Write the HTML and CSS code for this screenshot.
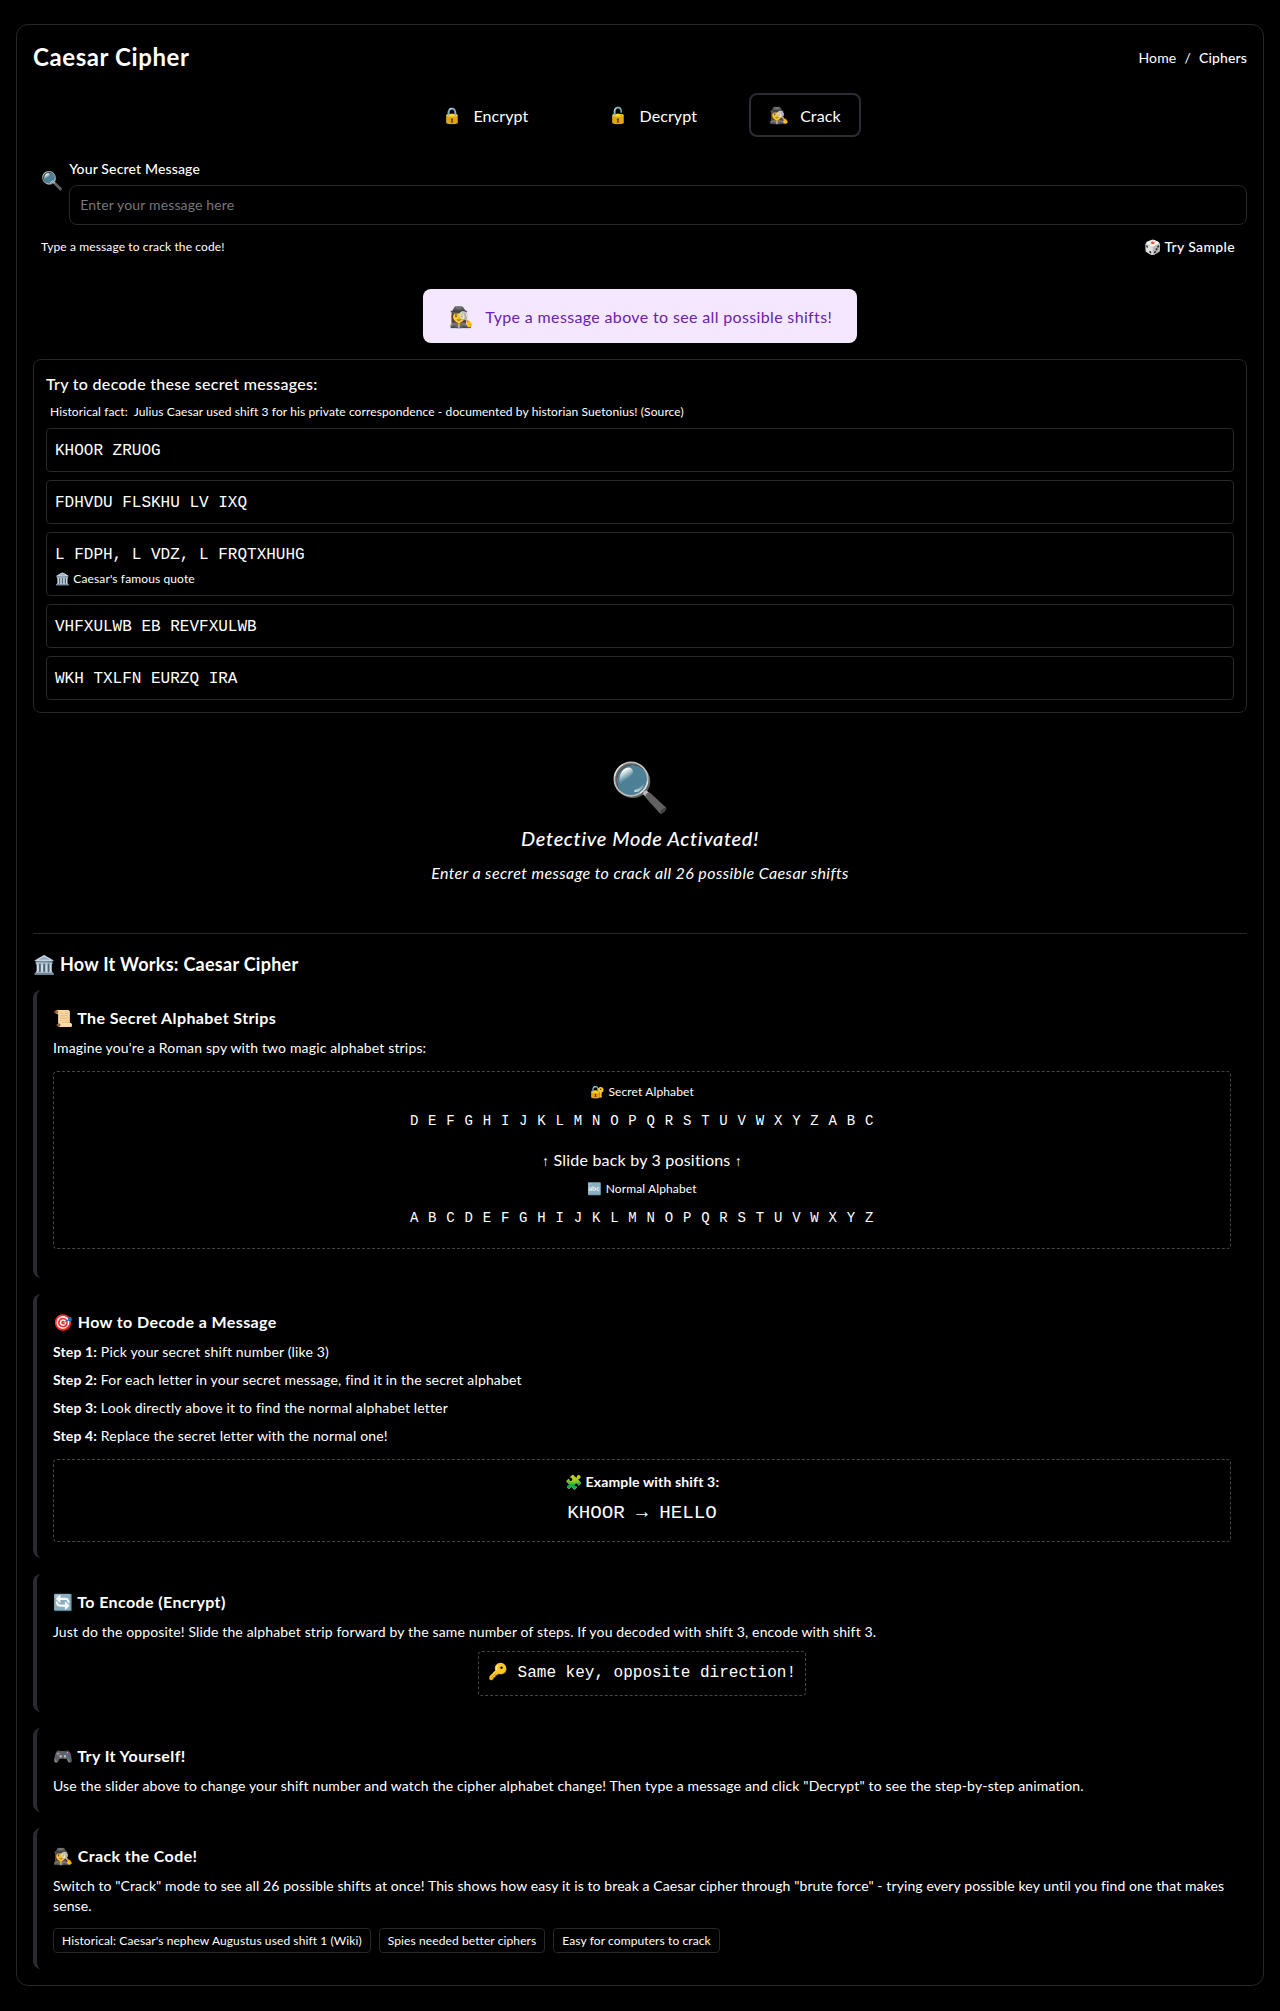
FILE: index.html
```html
<!DOCTYPE html>
<html lang="en">
<head>
  <meta charset="UTF-8" />
  <title>Caesar Cipher</title>
  <link rel="stylesheet" href="styles.css">
</head>
<body>
  <div class="page-card">
    <div class="top-bar">
      <h1>Caesar Cipher</h1>
      <div class="crumbs"><span>Home</span><span class="crumb-sep">/</span><span class="crumb-here">Ciphers</span></div>
    </div>

    <div class="tabs">
      <button class="tab"><span class="tab-icon">🔒</span>Encrypt</button>
      <button class="tab"><span class="tab-icon">🔓</span>Decrypt</button>
      <button class="tab active"><span class="tab-icon">🕵️‍♀️</span>Crack</button>
    </div>

    <div class="input-row">
      <span class="input-icon">🔍</span>
      <div class="input-wrap">
        <label class="input-label">Your Secret Message</label>
        <input class="message-input" type="text" placeholder="Enter your message here" />
      </div>
    </div>
    <div class="helper-row">
      <span class="helper-text">Type a message to crack the code!</span>
      <button class="sample-btn">🎲 Try Sample</button>
    </div>

    <div class="banner-wrap">
      <div class="banner"><span class="banner-icon">🕵️‍♀️</span>Type a message above to see all possible shifts!</div>
    </div>

    <div class="samples">
      <div class="samples-title">Try to decode these secret messages:</div>
      <div class="samples-fact">Historical fact: &nbsp;Julius Caesar used shift 3 for his private correspondence - documented by historian Suetonius! (Source)</div>
      <div class="sample-row"><span class="mono">KHOOR ZRUOG</span></div>
      <div class="sample-row"><span class="mono">FDHVDU FLSKHU LV IXQ</span></div>
      <div class="sample-row with-note"><span class="mono">L FDPH, L VDZ, L FRQTXHUHG</span><div class="sample-note">🏛️ Caesar's famous quote</div></div>
      <div class="sample-row"><span class="mono">VHFXULWB EB REVFXULWB</span></div>
      <div class="sample-row"><span class="mono">WKH TXLFN EURZQ IRA</span></div>
    </div>

    <div class="empty-state">
      <div class="empty-icon">🔍</div>
      <div class="empty-title">Detective Mode Activated!</div>
      <div class="empty-sub">Enter a secret message to crack all 26 possible Caesar shifts</div>
    </div>

    <hr class="divider" />

    <h2 class="how-title">🏛️ How It Works: Caesar Cipher</h2>

    <section class="how-card">
      <h3>📜 The Secret Alphabet Strips</h3>
      <p>Imagine you're a Roman spy with two magic alphabet strips:</p>
      <div class="dash-box strips">
        <div class="strip-label">🔐 Secret Alphabet</div>
        <div class="strip-letters">D E F G H I J K L M N O P Q R S T U V W X Y Z A B C</div>
        <div class="strip-slide"><span class="arrow">↑</span> Slide back by 3 positions <span class="arrow">↑</span></div>
        <div class="strip-label">🔤 Normal Alphabet</div>
        <div class="strip-letters">A B C D E F G H I J K L M N O P Q R S T U V W X Y Z</div>
      </div>
    </section>

    <section class="how-card">
      <h3>🎯 How to Decode a Message</h3>
      <p class="step"><strong>Step 1:</strong> Pick your secret shift number (like 3)</p>
      <p class="step"><strong>Step 2:</strong> For each letter in your secret message, find it in the secret alphabet</p>
      <p class="step"><strong>Step 3:</strong> Look directly above it to find the normal alphabet letter</p>
      <p class="step"><strong>Step 4:</strong> Replace the secret letter with the normal one!</p>
      <div class="dash-box example">
        <div class="example-label">🧩 Example with shift 3:</div>
        <div class="example-text">KHOOR → HELLO</div>
      </div>
    </section>

    <section class="how-card">
      <h3>🔄 To Encode (Encrypt)</h3>
      <p>Just do the opposite! Slide the alphabet strip forward by the same number of steps. If you decoded with shift 3, encode with shift 3.</p>
      <div class="key-wrap"><div class="dash-box key-note">🔑 Same key, opposite direction!</div></div>
    </section>

    <section class="how-card">
      <h3>🎮 Try It Yourself!</h3>
      <p>Use the slider above to change your shift number and watch the cipher alphabet change! Then type a message and click "Decrypt" to see the step-by-step animation.</p>
    </section>

    <section class="how-card last">
      <h3>🕵️‍♀️ Crack the Code!</h3>
      <p class="tight">Switch to "Crack" mode to see all 26 possible shifts at once! This shows how easy it is to break a Caesar cipher through "brute force" - trying every possible key until you find one that makes sense.</p>
      <div class="chips">
        <span class="chip">Historical: Caesar's nephew Augustus used shift 1 (Wiki)</span>
        <span class="chip">Spies needed better ciphers</span>
        <span class="chip">Easy for computers to crack</span>
      </div>
    </section>
  </div>
</body>
</html>
```

FILE: styles.css
```css
html, body {
  margin: 0;
  padding: 0;
}

body {
  background: #000;
  color: #fff;
  font-family: 'Lato', 'Noto Sans', sans-serif;
  font-size: 14px;
  letter-spacing: 0.15px;
  padding: 24px 16px 25px;
}

.page-card {
  border: 1px solid #26262b;
  border-radius: 12px;
  padding: 16px;
}

.top-bar {
  display: flex;
  justify-content: space-between;
  align-items: center;
  height: 32px;
}

h1 {
  margin: 0;
  font-size: 24px;
  font-weight: 700;
  letter-spacing: 0.6px;
  line-height: 32px;
}

.crumbs {
  display: flex;
  gap: 8px;
  font-size: 14px;
}

.crumb-here {
  font-weight: 500;
}

/* Tabs */
.tabs {
  display: flex;
  justify-content: center;
  gap: 32px;
  margin-top: 20px;
  padding-left: 3px;
}

.tab {
  height: 44px;
  padding: 0 18px;
  display: flex;
  align-items: center;
  background: none;
  border: 2px solid transparent;
  border-radius: 8px;
  color: #fff;
  font: inherit;
  font-size: 16px;
  letter-spacing: 0.1px;
}

.tab:first-child {
  margin-right: 8px;
}

.tab.active {
  border-color: #2c2c33;
}

.tab-icon {
  margin-right: 11px;
}

/* Input */
.input-row {
  display: flex;
  gap: 6px;
  margin-top: 22px;
  padding-left: 8px;
}

.input-icon {
  font-size: 18px;
  line-height: 24px;
  margin-top: 9px;
}

.input-wrap {
  flex: 1;
}

.input-label {
  display: block;
  font-size: 14px;
  font-weight: 500;
  line-height: 20px;
  margin-bottom: 6px;
}

.message-input {
  display: block;
  box-sizing: border-box;
  width: 100%;
  height: 40px;
  padding: 0 10px 2px;
  background: #000;
  border: 1px solid #26262b;
  border-radius: 8px;
  color: #fff;
  font: inherit;
  font-size: 14px;
  letter-spacing: 0.15px;
}

.message-input::placeholder {
  color: #77777c;
}

.helper-row {
  display: flex;
  justify-content: space-between;
  align-items: center;
  height: 30px;
  margin-top: 6px;
  padding: 0 12px 0 8px;
}

.helper-text {
  font-size: 12px;
  letter-spacing: 0.12px;
}

.sample-btn {
  background: none;
  border: none;
  padding: 0;
  color: #fff;
  font: inherit;
  font-size: 14px;
  font-weight: 500;
  letter-spacing: 0.35px;
}

/* Banner */
.banner-wrap {
  display: flex;
  justify-content: center;
  margin-top: 28px;
}

.banner {
  display: flex;
  align-items: center;
  height: 54px;
  padding: 0 25px 0 26px;
  background: #f3e8ff;
  border-radius: 8px;
  color: #6b21a8;
  font-size: 16px;
  letter-spacing: 0.35px;
}

.banner-icon {
  font-size: 20px;
  margin-right: 11px;
}

/* Sample messages */
.samples {
  margin-top: 16px;
  padding: 12px;
  border: 1px solid #26262b;
  border-radius: 8px;
}

.samples-title {
  font-size: 16px;
  font-weight: 500;
  letter-spacing: 0.3px;
  line-height: 24px;
}

.samples-fact {
  font-size: 12px;
  letter-spacing: 0.1px;
  line-height: 16px;
  margin: 8px 0 8px 4px;
}

.sample-row {
  padding: 12px 8px 10px;
  margin-bottom: 8px;
  border: 1px solid #26262b;
  border-radius: 4px;
}

.sample-row.with-note {
  padding-bottom: 8px;
}

.sample-row:last-child {
  margin-bottom: 0;
}

.mono {
  display: block;
  font-family: 'Liberation Mono', monospace;
  font-size: 16px;
  letter-spacing: 0;
  line-height: 20px;
}

.sample-note {
  font-size: 12px;
  letter-spacing: 0.12px;
  line-height: 16px;
  margin-top: 6px;
}

/* Empty state */
.empty-state {
  text-align: center;
  padding: 41px 0 40px;
}

.empty-icon {
  font-size: 48px;
  line-height: 64px;
}

.empty-title {
  font-size: 20px;
  font-style: italic;
  font-weight: 500;
  letter-spacing: 0.65px;
  line-height: 28px;
  margin-top: 6px;
}

.empty-sub {
  font-size: 16px;
  font-style: italic;
  letter-spacing: 0.4px;
  line-height: 24px;
  margin-top: 9px;
}

.divider {
  border: none;
  border-top: 1px solid #26262b;
  margin: 8px 0 0;
}

.how-title {
  margin: 17px 0 13px;
  font-size: 18px;
  font-weight: 700;
  letter-spacing: 0.27px;
  line-height: 26px;
}

/* How it works cards */
.how-card {
  padding: 16px;
  margin-bottom: 16px;
  border-left: 4px solid #2a2a30;
  border-radius: 8px;
}

.how-card.last {
  margin-bottom: 0;
}

.how-card h3 {
  margin: 0 0 8px;
  font-size: 16px;
  font-weight: 700;
  letter-spacing: 0.4px;
  line-height: 24px;
}

.how-card p {
  margin: 0;
  font-size: 14px;
  line-height: 20px;
}

.how-card p.step {
  margin-bottom: 8px;
}

.how-card p.tight {
  letter-spacing: 0.1px;
}

.dash-box {
  border: 1px dashed #44444a;
  border-radius: 4px;
  text-align: center;
}

.strips {
  margin: 13px 0;
  padding: 11px 12px 20px;
}

.strip-label {
  font-size: 12px;
  letter-spacing: 0.12px;
  line-height: 18px;
}

.strip-letters {
  font-family: 'Liberation Mono', monospace;
  font-size: 14px;
  letter-spacing: 0.7px;
  line-height: 20px;
  margin-top: 10px;
}

.strip-slide {
  font-size: 16px;
  letter-spacing: 0.2px;
  line-height: 24px;
  margin: 17px 0 7px;
}

.arrow {
  font-family: 'Liberation Sans', sans-serif;
  font-size: 14px;
}

.example {
  margin-top: 13px;
  padding: 12px 14px 16px;
}

.example-label {
  font-size: 14px;
  font-weight: 700;
  line-height: 20px;
}

.example-text {
  font-family: 'Liberation Mono', monospace;
  font-size: 19.2px;
  letter-spacing: 0;
  line-height: 24px;
  margin-top: 9px;
}

.key-wrap {
  display: flex;
  justify-content: center;
  margin-top: 9px;
}

.key-note {
  padding: 11px 9px 12px;
  font-family: 'Liberation Mono', monospace;
  font-size: 16px;
  letter-spacing: 0;
  line-height: 20px;
}

.chips {
  display: flex;
  gap: 8px;
  margin-top: 12px;
}

.chip {
  padding: 3px 8px;
  border: 1px solid #26262b;
  border-radius: 4px;
  font-size: 12px;
  letter-spacing: 0.1px;
  line-height: 17px;
}
```
